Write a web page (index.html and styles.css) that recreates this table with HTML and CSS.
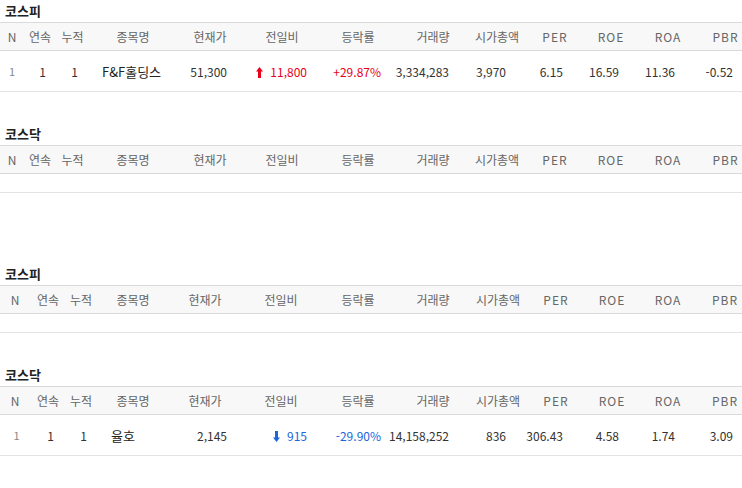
FILE: index.html
```html
<!DOCTYPE html>
<html lang="ko">
<head>
  <meta charset="UTF-8">
  <meta name="viewport" content="width=device-width, initial-scale=1.0">
  <title>상한가 / 하한가</title>
  <link rel="stylesheet" href="styles.css">
</head>
<body>
  <!-- 상한가 -->
  <div class="group">
    <section class="market">
      <h2 class="market-title">코스피</h2>
      <div class="board board-a">
        <div class="row head">
          <span>N</span><span>연속</span><span>누적</span><span>종목명</span><span>현재가</span><span>전일비</span><span>등락률</span><span>거래량</span><span>시가총액</span><span class="en">PER</span><span class="en">ROE</span><span class="en">ROA</span><span class="en">PBR</span>
        </div>
        <div class="row item">
          <span class="no">1</span><span>1</span><span>1</span><span class="name">F&amp;F홀딩스</span><span>51,300</span>
          <span class="up"><svg class="arrow" width="7" height="11" viewBox="0 0 7 11"><polygon points="3.5,0 7,4.5 5,4.5 5,11 2,11 2,4.5 0,4.5"/></svg>11,800</span>
          <span class="up">+29.87%</span><span>3,334,283</span><span>3,970</span><span>6.15</span><span>16.59</span><span>11.36</span><span>-0.52</span>
        </div>
      </div>
    </section>

    <section class="market">
      <h2 class="market-title">코스닥</h2>
      <div class="board board-a">
        <div class="row head">
          <span>N</span><span>연속</span><span>누적</span><span>종목명</span><span>현재가</span><span>전일비</span><span>등락률</span><span>거래량</span><span>시가총액</span><span class="en">PER</span><span class="en">ROE</span><span class="en">ROA</span><span class="en">PBR</span>
        </div>
        <div class="row empty"></div>
      </div>
    </section>
  </div>

  <!-- 하한가 -->
  <div class="group">
    <section class="market">
      <h2 class="market-title">코스피</h2>
      <div class="board board-b">
        <div class="row head">
          <span>N</span><span>연속</span><span>누적</span><span>종목명</span><span>현재가</span><span>전일비</span><span>등락률</span><span>거래량</span><span>시가총액</span><span class="en">PER</span><span class="en">ROE</span><span class="en">ROA</span><span class="en">PBR</span>
        </div>
        <div class="row empty"></div>
      </div>
    </section>

    <section class="market">
      <h2 class="market-title">코스닥</h2>
      <div class="board board-b">
        <div class="row head">
          <span>N</span><span>연속</span><span>누적</span><span>종목명</span><span>현재가</span><span>전일비</span><span>등락률</span><span>거래량</span><span>시가총액</span><span class="en">PER</span><span class="en">ROE</span><span class="en">ROA</span><span class="en">PBR</span>
        </div>
        <div class="row item">
          <span class="no">1</span><span>1</span><span>1</span><span class="name">율호</span><span>2,145</span>
          <span class="down"><svg class="arrow" width="7" height="11" viewBox="0 0 7 11"><polygon points="3.5,11 7,6.5 5,6.5 5,0 2,0 2,6.5 0,6.5"/></svg>915</span>
          <span class="down">-29.90%</span><span>14,158,252</span><span>836</span><span>306.43</span><span>4.58</span><span>1.74</span><span>3.09</span>
        </div>
      </div>
    </section>
  </div>
</body>
</html>
```

FILE: styles.css
```css
body {
  margin: 0;
  font-family: "Noto Sans CJK KR", "Noto Sans", sans-serif;
  color: #333;
  background: #fff;
}
.group + .group { margin-top: 70px; }
.market + .market { margin-top: 31px; }
.market-title {
  margin: 0; padding-left: 5px;
  height: 22px; line-height: 22px;
  font-size: 13px; font-weight: bold; color: #222;
}

.row { display: grid; align-items: center; }
.head {
  height: 27px;
  background: #f8f8f8;
  border-top: 1px solid #dadada;
  border-bottom: 1px solid #dadada;
  font-size: 12px; color: #666;
}
.head span { text-align: center; white-space: nowrap; }
.head .en { letter-spacing: 1px; }
.head span:last-child { padding-left: 8px; }

.item {
  height: 40px;
  border-bottom: 1px solid #e3e3e3;
  font-size: 12px;
  padding-right: 9px;
}
.item span { text-align: right; white-space: nowrap; }
.item .no { text-align: center; color: #888; font-size: 11px; }
.item .name { text-align: left; padding-left: 24px; font-size: 13px; color: #222; }
.empty { height: 18px; border-bottom: 1px solid #e3e3e3; }

.board-a .head { grid-template-columns: 24px 32px 33px 88px 66px 78px 74px 76px 52px 64px 48px 66px 41px; }
.board-b .head { grid-template-columns: 30px 36px 30px 74px 70px 82px 72px 78px 52px 64px 48px 64px 42px; }
.board-a .item { grid-template-columns: 24px 22px 32px 102px 47px 80px 74px 68px 57px 57px 56px 56px 58px; }
.board-b .item { grid-template-columns: 33px 21px 33px 93px 47px 80px 74px 68px 57px 57px 56px 56px 58px; }

.up { color: #e8001c; }
.down { color: #1a66dd; }
.arrow { fill: currentColor; vertical-align: -1px; margin-right: 7px; }
```
